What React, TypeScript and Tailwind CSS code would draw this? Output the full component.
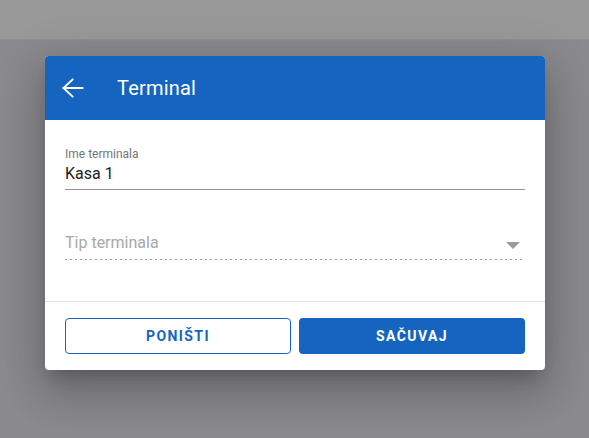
import React from "react";

export default function App() {
  return (
    <div className="relative w-[589px] h-[438px] overflow-hidden bg-[#8a8a8e] font-['Roboto','Liberation_Sans',sans-serif]">
      <div className="h-10 bg-[#999999] border-b border-[#8d8d8d]" />
      <div className="absolute left-[45px] top-[56px] w-[500px] rounded bg-white overflow-hidden shadow-[0px_11px_15px_-7px_rgba(0,0,0,0.2),0px_24px_38px_3px_rgba(0,0,0,0.14),0px_9px_46px_8px_rgba(0,0,0,0.12)]">
        <div className="h-16 bg-[#1565c0] flex items-center pl-[17px] text-white">
          <svg width="22" height="20" viewBox="0 0 22 20" fill="none" stroke="white" strokeWidth="1.8" strokeLinecap="square">
            <path d="M1.5 10H20.5" />
            <path d="M10.5 1.5L1.5 10L10.5 18.5" strokeLinejoin="miter" />
          </svg>
          <span className="ml-[33px] text-[20px] leading-6 font-normal tracking-[0.01em]">Terminal</span>
        </div>
        <div className="px-5 pt-[27px] pb-[41px]">
          <div>
            <div className="text-[12px] leading-[14px] text-[#757575]">Ime terminala</div>
            <div className="mt-[3px] text-[16px] leading-[19px] text-[#212121] pb-[6px] border-b border-[#949494]">Kasa 1</div>
          </div>
          <div className="mt-[43px] relative">
            <div className="text-[16px] leading-[19px] text-[#a8a8a8] pb-[7px]">Tip terminala</div>
            <div className="h-px bg-[linear-gradient(to_right,#9a9a9a_40%,transparent_40%)] bg-[length:5px_1px]" />
            <svg className="absolute right-[5px] top-[9px]" width="14" height="7" viewBox="0 0 14 7">
              <path d="M0 0H14L7 7Z" fill="#9a9a9a" />
            </svg>
          </div>
        </div>
        <div className="border-t border-[#e0e0e0] px-5 pt-4 pb-4 grid grid-cols-2 gap-2">
          <button className="h-9 rounded border border-[#1565c0] text-[#1565c0] text-[14px] font-bold tracking-[0.1em]">PONIŠTI</button>
          <button className="h-9 rounded bg-[#1565c0] text-white text-[14px] font-bold tracking-[0.1em]">SAČUVAJ</button>
        </div>
      </div>
    </div>
  );
}
